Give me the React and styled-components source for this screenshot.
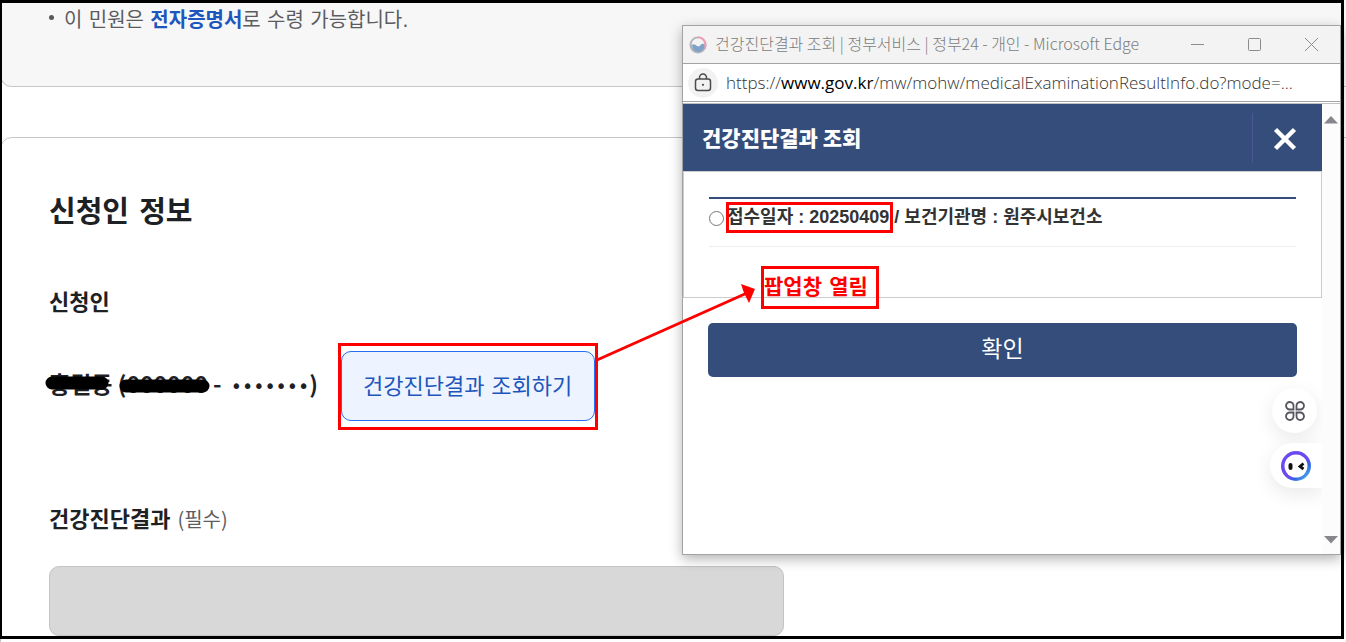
import React, { useState } from 'react';
import styled, { createGlobalStyle, css } from 'styled-components';


const GlobalStyle = createGlobalStyle`
  *, *::before, *::after {
    box-sizing: border-box;
  }
  body {
    margin: 0;
    background: #fff;
    color: #1e2124;
    font-family: 'DejaVu Sans', 'Noto Sans CJK KR', sans-serif;
  }
  button, input {
    font-family: inherit;
  }
`;

const hangul = css`
  font-family: 'Noto Sans CJK KR', sans-serif;
`;

const Page = styled.div`
  position: relative;
  height: 100vh;
  overflow: hidden;
`;

// black capture border, drawn over everything
const CaptureFrame = styled.div`
  position: absolute;
  inset: 0 2px 3px 0;
  border: 3px solid #000;
  border-left-width: 2px;
  pointer-events: none;
  z-index: 5;
`;

const NoticeCard = styled.section`
  margin-right: -20px;
  padding: 4px 48px 50px;
  border: 1px solid #c6c6c6;
  border-top: none;
  border-radius: 0 0 12px 12px;
  background: #f7f7f7;
`;

const NoticeList = styled.ul`
  margin: 0;
  padding: 0;
  list-style: none;
`;

const NoticeItem = styled.li`
  display: flex;
  align-items: flex-start;
  gap: 10px;
  font-size: 20px;
  line-height: 32px;
  color: #5c5c60;
  &::before {
    content: '';
    width: 5px;
    height: 5px;
    margin-top: 11px;
    border-radius: 50%;
    background: #58585c;
  }
`;

const NoticeLink = styled.a`
  color: #1d56bc;
  font-weight: 700;
  text-decoration: none;
`;

const FormCard = styled.section`
  margin: 50px -20px 0 0;
  padding: 50px 48px;
  border: 1px solid #c6c6c6;
  border-radius: 12px;
`;

const CardTitle = styled.h2`
  margin: 0 0 51px;
  font-size: 29px;
  font-weight: 700;
  line-height: 48px;
`;

const FieldTitle = styled.h3`
  margin: 0;
  font-size: 22px;
  font-weight: 700;
  line-height: 32px;
`;

const ApplicantRow = styled.div`
  display: flex;
  align-items: center;
  gap: 23px;
  margin: 32px 0 80px;
`;

const Applicant = styled.div`
  position: relative;
  min-width: 266px;
  padding-bottom: 4px;
  font-size: 23px;
  font-weight: 700;
  line-height: 32px;
  white-space: nowrap;
  ${hangul}
`;

const Dots = styled.span`
  margin-left: 4px;
  font-family: 'DejaVu Sans', sans-serif;
  font-size: 19px;
  font-weight: 400;
`;

const Redaction = styled.svg`
  position: absolute;
  top: 0;
  left: -4px;
`;

const Marked = styled.span`
  position: relative;
  display: inline-block;
  &::after {
    content: '';
    position: absolute;
    inset: ${(props) => props.$inset};
    border: 3px solid #fe0000;
    pointer-events: none;
  }
`;

const LookupButton = styled.button`
  display: block;
  height: 70px;
  padding: 0 22px 4px 21px;
  border: 1px solid #256ef4;
  border-radius: 10px;
  background: #edf4ff;
  color: #1d56bc;
  font-size: 22px;
  white-space: nowrap;
  cursor: pointer;
`;

const FieldLabel = styled.label`
  display: block;
  margin-bottom: 31px;
  font-size: 22px;
  font-weight: 700;
  line-height: 32px;
  ${hangul}
`;

const Required = styled.span`
  margin-left: 7px;
  font-size: 20px;
  font-weight: 400;
  color: #5c5c60;
`;

const ResultInput = styled.input`
  display: block;
  width: 100%;
  max-width: 735px;
  height: 70px;
  padding: 0 16px;
  border: 1px solid #c4c4c4;
  border-radius: 10px;
  background: #d8d8d8;
  font-size: 22px;
`;

const Popup = styled.div`
  position: absolute;
  top: 25px;
  left: 682px;
  right: 5px;
  border: 1px solid #a3a3a3;
  background: #fff;
  box-shadow: 0 4px 12px rgba(0, 0, 0, 0.3);
  z-index: 1;
`;

const TitleBar = styled.header`
  display: flex;
  align-items: center;
  height: 38px;
  padding: 0 21px 0 6px;
  border-bottom: 1px solid #a3a3a3;
  background: #f3f3f3;
  color: #8c8c8c;
`;

const WindowTitle = styled.span`
  flex: 1;
  margin-left: 8px;
  padding-bottom: 3px;
  overflow: hidden;
  font-size: 16px;
  font-weight: 300;
  color: #7c7c7c;
  white-space: nowrap;
  ${hangul}
`;

const WindowControls = styled.div`
  display: flex;
  gap: 42px;
`;

const WindowButton = styled.button`
  display: flex;
  padding: 0;
  border: none;
  background: none;
  color: #8c8c8c;
`;

const AddressBar = styled.div`
  display: flex;
  align-items: center;
  gap: 8px;
  height: 38px;
  padding: 0 5px;
  border-bottom: 1px solid #a3a3a3;
`;

const SiteInfo = styled.button`
  display: flex;
  align-items: center;
  justify-content: center;
  width: 30px;
  height: 30px;
  padding: 0;
  border: none;
  border-radius: 50%;
  background: #f2f2f2;
`;

const Url = styled.span`
  font-family: 'Open Sans', 'Noto Sans', sans-serif;
  font-size: 17px;
  font-weight: 300;
  color: #333;
  white-space: nowrap;
  b {
    font-weight: 400;
    color: #000;
  }
`;

const PopupBody = styled.div`
  display: flex;
  margin-top: 1px;
  border-top: 1px solid #c0c0c0;
`;

const PopupContent = styled.main`
  position: relative;
  flex: 1;
  min-height: 450px;
  overflow: hidden;
`;

const PopupHeader = styled.div`
  display: flex;
  align-items: center;
  justify-content: space-between;
  height: 67px;
  padding-left: 19px;
  background: #344d7a;
`;

const PopupTitle = styled.h1`
  margin: 0;
  padding-bottom: 2px;
  color: #fff;
  font-size: 21px;
  font-weight: 900;
  ${hangul}
`;

const CloseButton = styled.button`
  display: flex;
  align-items: center;
  justify-content: center;
  width: 70px;
  height: 50px;
  padding: 2px 5px 0 0;
  border: none;
  border-left: 1px solid #4d5796;
  background: none;
`;

const ResultPanel = styled.div`
  padding: 25px;
  height: 127px;
  border: 1px solid #ccc;
`;

const ResultRow = styled.label`
  display: flex;
  align-items: flex-start;
  gap: 3px;
  height: 50px;
  padding-top: 4px;
  border-top: 2px solid #344d7a;
  border-bottom: 1px solid #eee;
  color: #333;
  font-family: 'Liberation Sans', 'Noto Sans CJK KR', sans-serif;
  font-size: 18px;
  font-weight: 700;
  line-height: 28px;
  white-space: nowrap;
`;

const Radio = styled.input`
  appearance: none;
  width: 15px;
  height: 15px;
  margin: 8px 0 0;
  border: 1px solid #767676;
  border-radius: 50%;
  &:checked {
    background: radial-gradient(#344d7a 45%, #fff 50%);
  }
`;

const ConfirmButton = styled.button`
  display: block;
  width: calc(100% - 50px);
  height: 54px;
  margin: 25px;
  padding: 0 0 6px;
  border: none;
  border-radius: 5px;
  background: #344d7a;
  color: #fff;
  font-size: 23px;
  cursor: pointer;
`;

const FloatingTools = styled.div`
  position: absolute;
  right: 0;
  bottom: 66px;
  display: flex;
  flex-direction: column;
  align-items: flex-end;
  gap: 10px;
`;

const ToolButton = styled.button`
  display: flex;
  align-items: center;
  justify-content: center;
  width: ${(props) => (props.$docked ? '52px' : '45px')};
  height: 45px;
  margin-right: ${(props) => (props.$docked ? '0' : '5px')};
  padding: 0;
  border: none;
  border-radius: ${(props) => (props.$docked ? '23px 0 0 23px' : '50%')};
  background: #fff;
  box-shadow: 0 6px 20px rgba(0, 0, 0, 0.09);
`;

const ScrollBar = styled.div`
  display: flex;
  flex-direction: column;
  align-items: center;
  justify-content: space-between;
  width: 18px;
  padding: 12px 0 10px;
  background: #fcfcfc;
`;

const Arrow = styled.svg`
  position: absolute;
  top: 280px;
  left: 595px;
  pointer-events: none;
  z-index: 2;
`;

const PopupNote = styled.strong`
  position: absolute;
  top: 266px;
  left: 761px;
  height: 43px;
  padding: 0 8px 0 0;
  border: 3px solid #fe0000;
  color: #fe0000;
  font-size: 21px;
  line-height: 36px;
  white-space: nowrap;
  z-index: 2;
`;


const GovIcon = () => (
  <svg width="18" height="18" viewBox="0 0 18 18">
    <circle cx="9" cy="9" r="8.500" fill="#b4b4ba" />
    <path d="M9 .5A8.500 8.500 0 0 1 16.500 13L13 11 9 4Z" fill="#f09ab4" />
    <circle cx="9" cy="8.500" r="6.300" fill="#f3f3f4" />
    <path d="M3 9C3 13 5.500 16 9 16c3.500 0 6.500-2.500 6.500-6.500 0-2-2.500-2.500-3.500-1-1 1.800-2.500 2.300-4 1.500C6.500 9 4.500 7.500 3 9Z" fill="#7fa3c6" />
  </svg>
);

const LockIcon = () => (
  <svg width="18" height="20" viewBox="0 0 18 20" fill="none" stroke="#4c4c50" strokeWidth="1.500">
    <rect x="1.500" y="6" width="15" height="11.500" rx="2.500" />
    <path d="M5.500 6V4.500a3.500 3.500 0 0 1 7 0V6" />
    <circle cx="9" cy="11.800" r="1.100" fill="#4c4c50" stroke="none" />
  </svg>
);

const CloverIcon = () => (
  <svg width="20" height="20" viewBox="0 0 20 20" fill="none" stroke="#55555f" strokeWidth="1.800">
    <path d="M8.500 8.500H5A3.750 3.750 0 1 1 8.500 5Z" />
    <path d="M11.500 8.500V5A3.750 3.750 0 1 1 15 8.500Z" />
    <path d="M8.500 11.500V15A3.750 3.750 0 1 1 5 11.500Z" />
    <path d="M11.500 11.500H15A3.750 3.750 0 1 1 11.500 15Z" />
  </svg>
);

const BotIcon = () => (
  <svg width="30" height="30" viewBox="0 0 30 30">
    <defs>
      <linearGradient id="ring" x1="0" y1="0" x2="1" y2="1">
        <stop offset="0.550" stopColor="#6b48f2" />
        <stop offset="0.700" stopColor="#3264e6" />
        <stop offset="0.850" stopColor="#4aa3e6" />
      </linearGradient>
    </defs>
    <circle cx="15" cy="15" r="15" fill="url(#ring)" />
    <circle cx="15" cy="15" r="11.500" fill="#fff" />
    <rect x="7.500" y="12" width="4" height="7" rx="2" fill="#111" />
    <path d="M22.500 12.500l-3.500 3 3.500 2.500" fill="none" stroke="#111" strokeWidth="2.800" />
  </svg>
);


export default function App() {
  const [picked, setPicked] = useState(false);

  return (
    <Page>
      <GlobalStyle />
      <NoticeCard>
        <NoticeList>
          <NoticeItem>
            <span>이 민원은 <NoticeLink href="#certificate">전자증명서</NoticeLink>로 수령 가능합니다.</span>
          </NoticeItem>
        </NoticeList>
      </NoticeCard>

      <FormCard>
        <CardTitle>신청인 정보</CardTitle>
        <FieldTitle>신청인</FieldTitle>
        <ApplicantRow>
          <Applicant>
            홍길동 (000000 - <Dots>•••••••</Dots>)
            <Redaction width="170" height="36" stroke="#000" strokeWidth="13" strokeLinecap="round">
              <path d="M7 16H57M81 19H158" />
            </Redaction>
          </Applicant>
          <Marked $inset="-8px -3px -9px">
            <LookupButton type="button">건강진단결과 조회하기</LookupButton>
          </Marked>
        </ApplicantRow>
        <FieldLabel htmlFor="result">
          건강진단결과<Required>(필수)</Required>
        </FieldLabel>
        <ResultInput id="result" type="text" readOnly />
      </FormCard>

      <Popup>
        <TitleBar>
          <GovIcon />
          <WindowTitle>건강진단결과 조회 | 정부서비스 | 정부24 - 개인 - Microsoft Edge</WindowTitle>
          <WindowControls>
            <WindowButton type="button" aria-label="최소화">
              <svg width="15" height="15" stroke="currentColor"><path d="M1 7.500H14" /></svg>
            </WindowButton>
            <WindowButton type="button" aria-label="최대화">
              <svg width="15" height="15" fill="none" stroke="currentColor"><rect x="1.500" y="1.500" width="12" height="12" rx="1" /></svg>
            </WindowButton>
            <WindowButton type="button" aria-label="창 닫기">
              <svg width="15" height="15" stroke="currentColor"><path d="M1 1L14 14M14 1L1 14" /></svg>
            </WindowButton>
          </WindowControls>
        </TitleBar>
        <AddressBar>
          <SiteInfo type="button" aria-label="사이트 정보"><LockIcon /></SiteInfo>
          <Url>https://<b>www.gov.kr</b>/mw/mohw/medicalExaminationResultInfo.do?mode=...</Url>
        </AddressBar>
        <PopupBody>
          <PopupContent>
            <PopupHeader>
              <PopupTitle>건강진단결과 조회</PopupTitle>
              <CloseButton type="button" aria-label="닫기">
                <svg width="24" height="24" stroke="#fff" strokeWidth="4.500"><path d="M2.500 2.500L21.500 21.500M21.500 2.500L2.500 21.500" /></svg>
              </CloseButton>
            </PopupHeader>
            <ResultPanel>
              <ResultRow>
                <Radio type="radio" checked={picked} onChange={() => setPicked(true)} />
                <span>
                  <Marked $inset="-1px -4px -2px -1px">접수일자 : 20250409</Marked> / 보건기관명 : 원주시보건소
                </span>
              </ResultRow>
            </ResultPanel>
            <ConfirmButton type="button">확인</ConfirmButton>
            <FloatingTools>
              <ToolButton type="button" aria-label="도구"><CloverIcon /></ToolButton>
              <ToolButton type="button" aria-label="챗봇" $docked><BotIcon /></ToolButton>
            </FloatingTools>
          </PopupContent>
          <ScrollBar>
            <svg width="14" height="8" fill="#86868c"><path d="M0 7.500L7 0L14 7.500Z" /></svg>
            <svg width="14" height="8" fill="#86868c"><path d="M0 0H14L7 7.500Z" /></svg>
          </ScrollBar>
        </PopupBody>
      </Popup>

      <Arrow width="165" height="85">
        <path d="M2 80L152 13" stroke="#fe0000" strokeWidth="3" />
        <path d="M160 9L146 4L149 13L154 23Z" fill="#fe0000" />
      </Arrow>
      <PopupNote>팝업창 열림</PopupNote>
      <CaptureFrame />
    </Page>
  );
}
